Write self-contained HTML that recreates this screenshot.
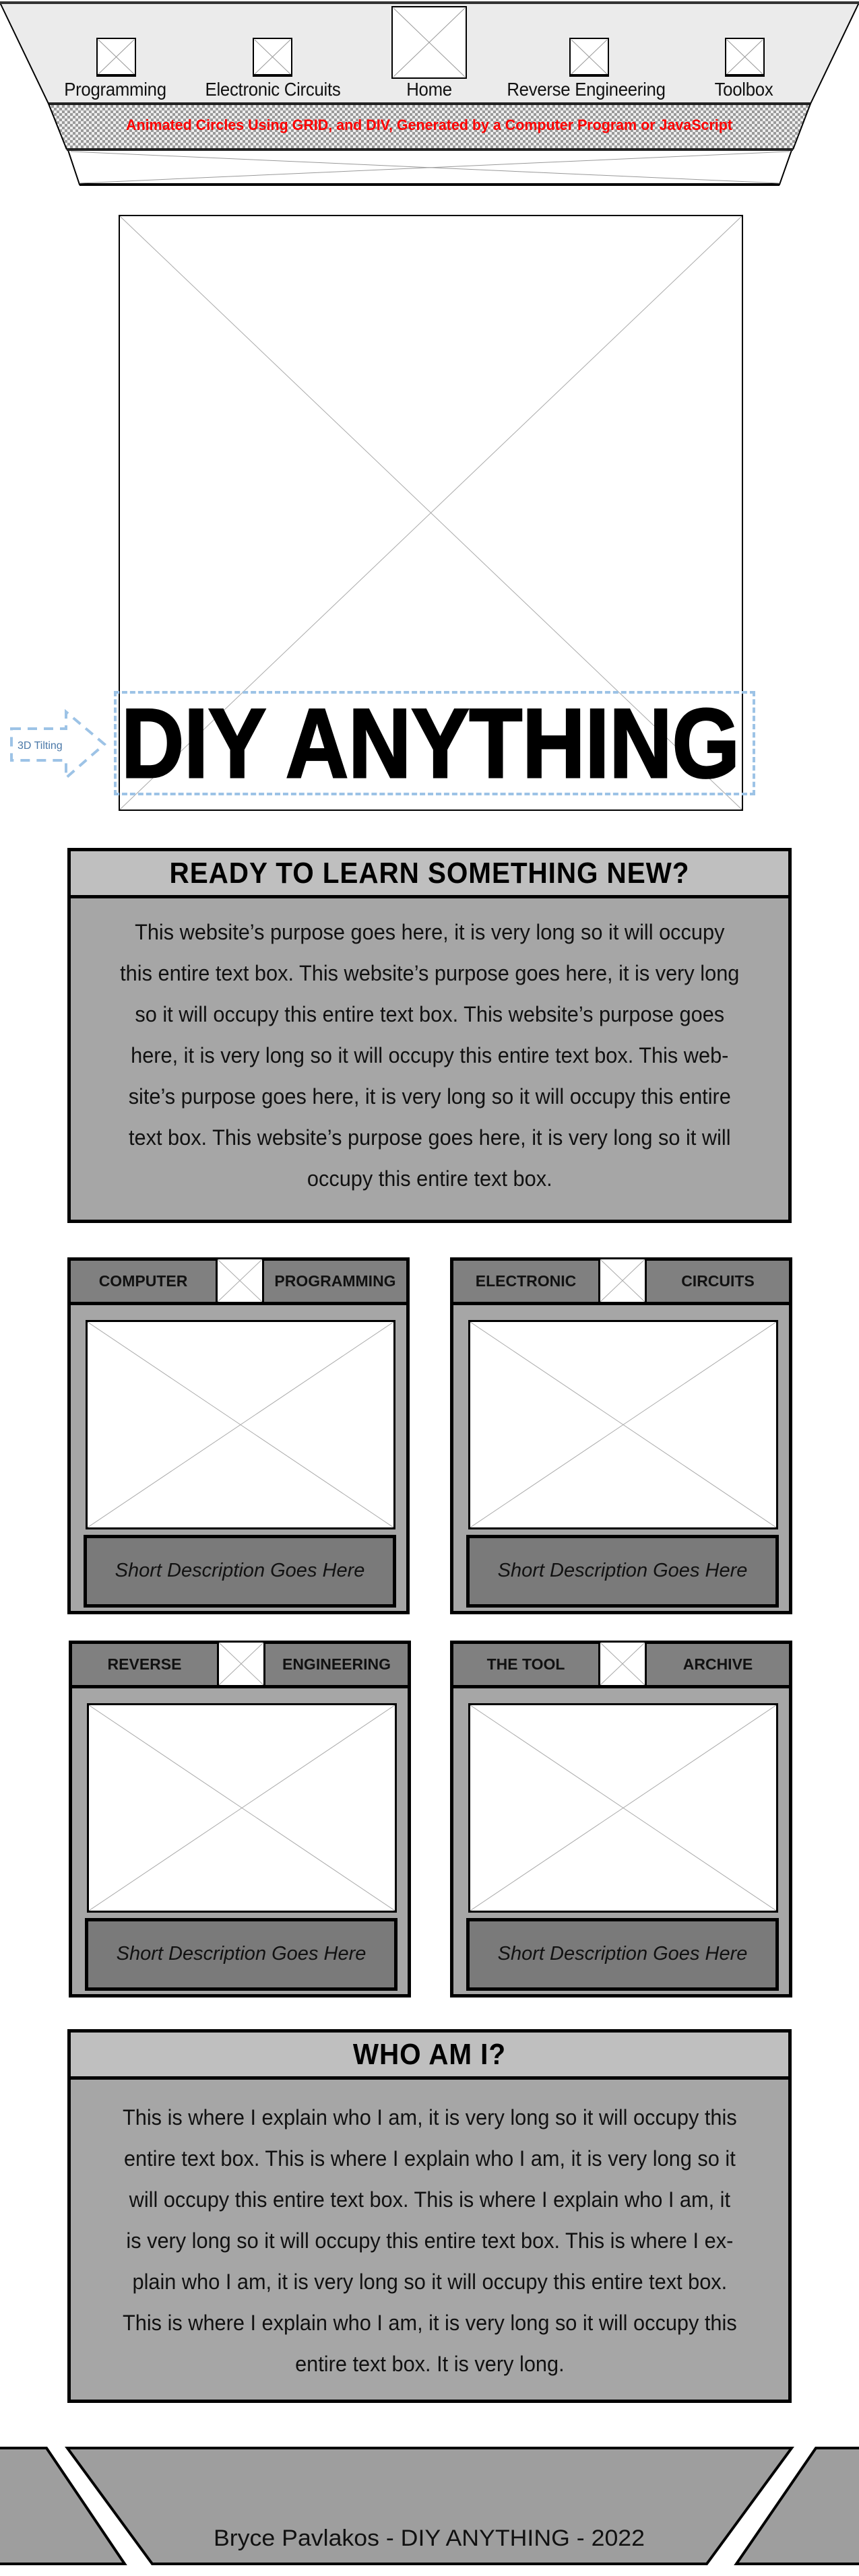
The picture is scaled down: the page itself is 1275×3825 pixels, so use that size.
<!DOCTYPE html>
<html><head><meta charset="utf-8">
<style>
*{margin:0;padding:0;box-sizing:border-box}
body{width:1275px;height:3825px;background:#fff;position:relative;font-family:"Liberation Sans",sans-serif;overflow:hidden}
.abs{position:absolute}
.nav{position:absolute;top:117px;font-size:28px;color:#111;transform:translateX(-50%) scaleX(0.92);white-space:nowrap;letter-spacing:-0.3px}
.box{position:absolute;left:100px;width:1075px;border:5px solid #000;background:#a6a6a6}
.box .hd{height:70px;background:#bfbfbf;border-bottom:5px solid #000;text-align:center;font-weight:bold;font-size:44px;line-height:66px;letter-spacing:1px}
.box .hd span{display:inline-block;transform:scaleX(0.92)}
.box .bd{text-align:center;font-size:32px;line-height:61px;color:#111;padding-top:20px;white-space:nowrap}
.box .bd span{display:inline-block;transform:scaleX(0.96)}
.card{position:absolute;width:508px;height:530px;border:5px solid #000;background:#a6a6a6}
.card .ch{position:absolute;left:0;top:0;width:498px;height:66px;background:#808080;border-bottom:5px solid #000}
.card .ct{position:absolute;top:0;height:61px;line-height:61px;text-align:center;font-weight:bold;font-size:23px;color:#111}
.card .cw{position:absolute;left:215px;top:-2px;width:72px;height:63px;background:#fff;border-left:3px solid #000;border-right:3px solid #000}
.card .img{position:absolute;left:22px;top:88px;width:460px;height:311px;background:#fff;border:3px solid #000}
.card .ds{position:absolute;left:19px;top:407px;width:464px;height:108px;background:#7a7a7a;border:5px solid #000;text-align:center;line-height:96px;font-style:italic;font-size:29px;color:#111;white-space:nowrap}
svg.x{position:absolute;left:0;top:0;width:100%;height:100%}
</style></head><body>

<svg class="abs" style="left:0;top:0" width="1275" height="290" viewBox="0 0 1275 290">
<defs>
<pattern id="ck" width="8" height="8" patternUnits="userSpaceOnUse">
<rect width="8" height="8" fill="#eeeeee"/>
<rect x="0" y="0" width="4" height="4" fill="#9a9a9a"/>
<rect x="4" y="4" width="4" height="4" fill="#9a9a9a"/>
</pattern>
</defs>
<polygon points="0,4 1275,4 1203,154 72,154" fill="#ebebeb" stroke="#000" stroke-width="2"/>
<line x1="0" y1="4" x2="1275" y2="4" stroke="#333" stroke-width="4"/>
<polygon points="72,154 1203,154 1177,222 99,222" fill="url(#ck)"/>
<line x1="72" y1="154" x2="1203" y2="154" stroke="#222" stroke-width="4"/>
<line x1="72" y1="154" x2="99" y2="222" stroke="#000" stroke-width="2"/>
<line x1="1203" y1="154" x2="1177" y2="222" stroke="#000" stroke-width="2"/>
<polygon points="101,223 1175,223 1157,274 118,274" fill="#fff" stroke="#000" stroke-width="2"/>
<line x1="99" y1="222" x2="1177" y2="222" stroke="#222" stroke-width="4"/>
<line x1="118" y1="274" x2="1157" y2="274" stroke="#000" stroke-width="4"/>
<line x1="105" y1="225" x2="1157" y2="272" stroke="#999" stroke-width="1"/>
<line x1="1172" y1="225" x2="118" y2="272" stroke="#999" stroke-width="1"/>
<g fill="#fff" stroke="#000" stroke-width="2">
<rect x="144" y="57" width="57" height="56"/>
<rect x="376" y="57" width="57" height="56"/>
<rect x="582" y="10" width="110" height="106"/>
<rect x="846" y="57" width="57" height="56"/>
<rect x="1077" y="57" width="57" height="56"/>
</g>
<g stroke="#000" stroke-width="4">
<line x1="144" y1="112" x2="201" y2="112"/><line x1="376" y1="112" x2="433" y2="112"/>
<line x1="846" y1="112" x2="903" y2="112"/><line x1="1077" y1="112" x2="1134" y2="112"/>
</g>
<g stroke="#999" stroke-width="1">
<line x1="146" y1="59" x2="199" y2="110"/><line x1="199" y1="59" x2="146" y2="110"/>
<line x1="378" y1="59" x2="431" y2="110"/><line x1="431" y1="59" x2="378" y2="110"/>
<line x1="584" y1="12" x2="690" y2="114"/><line x1="690" y1="12" x2="584" y2="114"/>
<line x1="848" y1="59" x2="901" y2="110"/><line x1="901" y1="59" x2="848" y2="110"/>
<line x1="1079" y1="59" x2="1132" y2="110"/><line x1="1132" y1="59" x2="1079" y2="110"/>
</g>
<text x="637" y="193" text-anchor="middle" font-family="Liberation Sans" font-weight="bold" font-size="22" fill="#ff0000" textLength="900" lengthAdjust="spacingAndGlyphs">Animated Circles Using GRID, and DIV, Generated by a Computer Program or JavaScript</text>
</svg>
<div class="nav" style="left:171px">Programming</div>
<div class="nav" style="left:405px">Electronic Circuits</div>
<div class="nav" style="left:637px">Home</div>
<div class="nav" style="left:870px">Reverse Engineering</div>
<div class="nav" style="left:1104px">Toolbox</div>

<!-- hero -->
<div class="abs" style="left:176px;top:319px;width:927px;height:885px;border:2px solid #000;background:#fff">
<svg class="x" viewBox="0 0 100 100" preserveAspectRatio="none"><line x1="0" y1="0" x2="100" y2="100" stroke="#aaa" stroke-width="1" vector-effect="non-scaling-stroke"/><line x1="100" y1="0" x2="0" y2="100" stroke="#aaa" stroke-width="1" vector-effect="non-scaling-stroke"/></svg>
</div>
<div class="abs" style="left:169px;top:1026px;width:952px;height:155px;border:4px dashed #9dc3e6"></div>
<svg class="abs" style="left:0;top:1020px" width="1275" height="160">
<text x="180" y="134" font-family="Liberation Sans" font-weight="bold" font-size="146" fill="#000" stroke="#000" stroke-width="3" textLength="918" lengthAdjust="spacingAndGlyphs">DIY ANYTHING</text>
<polygon points="17,62 98,62 98,37 155,85 98,135 98,109 17,109" fill="none" stroke="#9dc3e6" stroke-width="4" stroke-dasharray="14,10"/>
<text x="26" y="92" font-family="Liberation Sans" font-size="16" fill="#4a78a8">3D Tilting</text>
</svg>

<!-- box 1 -->
<div class="box" style="top:1259px;height:557px">
<div class="hd"><span>READY TO LEARN SOMETHING NEW?</span></div>
<div class="bd"><span>This website’s purpose goes here, it is very long so it will occupy<br>this entire text box. This website’s purpose goes here, it is very long<br>so it will occupy this entire text box. This website’s purpose goes<br>here, it is very long so it will occupy this entire text box. This web-<br>site’s purpose goes here, it is very long so it will occupy this entire<br>text box. This website’s purpose goes here, it is very long so it will<br>occupy this entire text box.</span></div>
</div>

<!-- cards -->
<div class="card" style="left:100px;top:1867px">
<div class="ch"></div>
<div class="ct" style="left:0;width:215px">COMPUTER</div>
<div class="cw"><svg class="x" viewBox="0 0 10 10" preserveAspectRatio="none"><line x1="0" y1="0" x2="10" y2="10" stroke="#aaa" vector-effect="non-scaling-stroke"/><line x1="10" y1="0" x2="0" y2="10" stroke="#aaa" vector-effect="non-scaling-stroke"/></svg></div>
<div class="ct" style="left:287px;width:211px">PROGRAMMING</div>
<div class="img"><svg class="x" viewBox="0 0 10 10" preserveAspectRatio="none"><line x1="0" y1="0" x2="10" y2="10" stroke="#aaa" vector-effect="non-scaling-stroke"/><line x1="10" y1="0" x2="0" y2="10" stroke="#aaa" vector-effect="non-scaling-stroke"/></svg></div>
<div class="ds">Short Description Goes Here</div>
</div>
<div class="card" style="left:668px;top:1867px">
<div class="ch"></div>
<div class="ct" style="left:0;width:215px">ELECTRONIC</div>
<div class="cw"><svg class="x" viewBox="0 0 10 10" preserveAspectRatio="none"><line x1="0" y1="0" x2="10" y2="10" stroke="#aaa" vector-effect="non-scaling-stroke"/><line x1="10" y1="0" x2="0" y2="10" stroke="#aaa" vector-effect="non-scaling-stroke"/></svg></div>
<div class="ct" style="left:287px;width:211px">CIRCUITS</div>
<div class="img"><svg class="x" viewBox="0 0 10 10" preserveAspectRatio="none"><line x1="0" y1="0" x2="10" y2="10" stroke="#aaa" vector-effect="non-scaling-stroke"/><line x1="10" y1="0" x2="0" y2="10" stroke="#aaa" vector-effect="non-scaling-stroke"/></svg></div>
<div class="ds">Short Description Goes Here</div>
</div>
<div class="card" style="left:102px;top:2436px">
<div class="ch"></div>
<div class="ct" style="left:0;width:215px">REVERSE</div>
<div class="cw"><svg class="x" viewBox="0 0 10 10" preserveAspectRatio="none"><line x1="0" y1="0" x2="10" y2="10" stroke="#aaa" vector-effect="non-scaling-stroke"/><line x1="10" y1="0" x2="0" y2="10" stroke="#aaa" vector-effect="non-scaling-stroke"/></svg></div>
<div class="ct" style="left:287px;width:211px">ENGINEERING</div>
<div class="img"><svg class="x" viewBox="0 0 10 10" preserveAspectRatio="none"><line x1="0" y1="0" x2="10" y2="10" stroke="#aaa" vector-effect="non-scaling-stroke"/><line x1="10" y1="0" x2="0" y2="10" stroke="#aaa" vector-effect="non-scaling-stroke"/></svg></div>
<div class="ds">Short Description Goes Here</div>
</div>
<div class="card" style="left:668px;top:2436px">
<div class="ch"></div>
<div class="ct" style="left:0;width:215px">THE TOOL</div>
<div class="cw"><svg class="x" viewBox="0 0 10 10" preserveAspectRatio="none"><line x1="0" y1="0" x2="10" y2="10" stroke="#aaa" vector-effect="non-scaling-stroke"/><line x1="10" y1="0" x2="0" y2="10" stroke="#aaa" vector-effect="non-scaling-stroke"/></svg></div>
<div class="ct" style="left:287px;width:211px">ARCHIVE</div>
<div class="img"><svg class="x" viewBox="0 0 10 10" preserveAspectRatio="none"><line x1="0" y1="0" x2="10" y2="10" stroke="#aaa" vector-effect="non-scaling-stroke"/><line x1="10" y1="0" x2="0" y2="10" stroke="#aaa" vector-effect="non-scaling-stroke"/></svg></div>
<div class="ds">Short Description Goes Here</div>
</div>

<!-- who am i -->
<div class="box" style="top:3013px;height:555px">
<div class="hd"><span>WHO AM I?</span></div>
<div class="bd" style="padding-top:26px"><span>This is where I explain who I am, it is very long so it will occupy this<br>entire text box. This is where I explain who I am, it is very long so it<br>will occupy this entire text box. This is where I explain who I am, it<br>is very long so it will occupy this entire text box. This is where I ex-<br>plain who I am, it is very long so it will occupy this entire text box.<br>This is where I explain who I am, it is very long so it will occupy this<br>entire text box. It is very long.</span></div>
</div>

<!-- footer -->
<svg class="abs" style="left:0;top:3625px" width="1275" height="190">
<g fill="#9e9e9e" stroke="#000" stroke-width="4" stroke-linejoin="miter">
<polygon points="-5,10 69,10 185,182 -5,182"/>
<polygon points="100,10 1175,10 1049,182 226,182"/>
<polygon points="1211,10 1280,10 1280,182 1093,182"/>
</g>
<text x="637" y="155" text-anchor="middle" font-family="Liberation Sans" font-size="34" fill="#111" textLength="640" lengthAdjust="spacingAndGlyphs">Bryce Pavlakos - DIY ANYTHING - 2022</text>
</svg>
</body></html>
